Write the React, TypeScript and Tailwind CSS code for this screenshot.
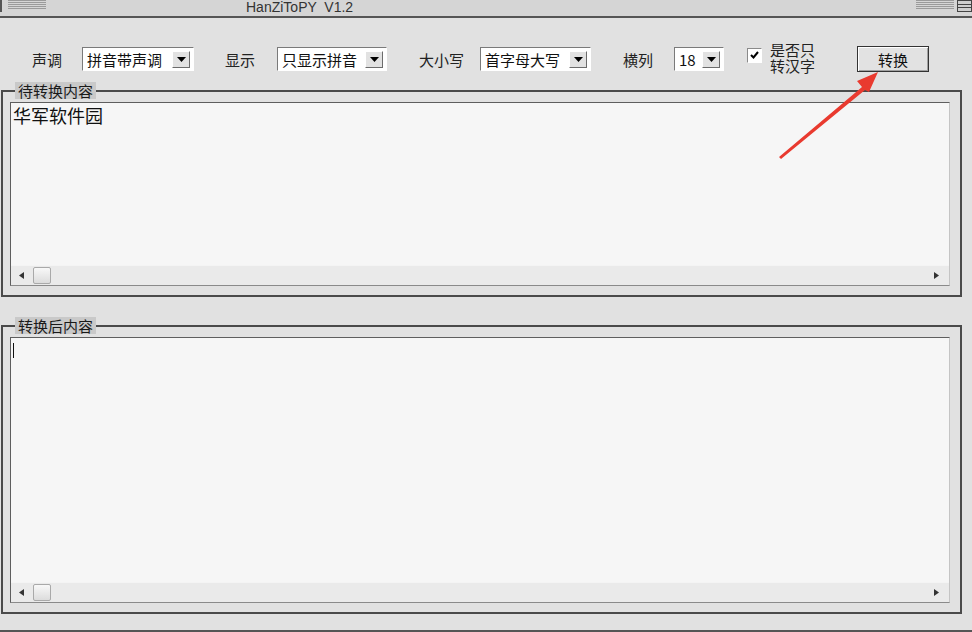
const font = { fontFamily: '"Noto Sans CJK SC", "Noto Sans", sans-serif' };

function Grip({ className = "" }: { className?: string }) {
  return (
    <div className={`flex flex-col gap-[1px] ${className}`}>
      {[0, 1, 2, 3, 4].map((i) => (
        <div key={i} className="h-[1px] border-b border-[#9a9a9a] bg-white" />
      ))}
    </div>
  );
}

function Combo({ text, width }: { text: string; width: string }) {
  return (
    <div className={`flex h-[24px] ${width} items-center border border-b-white border-l-[#7a7a7a] border-r-white border-t-[#7a7a7a] bg-white pl-[4px] pr-[3px]`}>
      <span className="flex-1 text-[15px] leading-none text-[#111]">{text}</span>
      <div className="flex h-[17px] w-[18px] items-center justify-center border border-b-[#6c6c6c] border-l-white border-r-[#6c6c6c] border-t-white bg-[#e2e2e2]">
        <svg width="9" height="5" viewBox="0 0 9 5"><path d="M0 0h9L4.5 5z" fill="#000" /></svg>
      </div>
    </div>
  );
}

function Label({ text, width, className = "" }: { text: string; width: string; className?: string }) {
  return <span className={`${width} ${className} text-[15px] leading-none text-[#222]`}>{text}</span>;
}

function ScrollBar() {
  return (
    <div className="flex h-[20px] items-center border-t border-[#f4f4f4] bg-[#eaeaea] pl-[8px] pr-[10px]">
      <svg width="5" height="7" viewBox="0 0 5 7"><path d="M5 0v7L0 3.5z" fill="#333" /></svg>
      <div className="ml-[9px] h-[17px] w-[18px] rounded-[2px] border border-[#a9a9a9] bg-gradient-to-b from-[#f8f8f8] to-[#dcdcdc]" />
      <div className="flex-1" />
      <svg width="5" height="7" viewBox="0 0 5 7"><path d="M0 0v7L5 3.5z" fill="#333" /></svg>
    </div>
  );
}

function Group({ title, children, height, mt }: { title: string; children: React.ReactNode; height: string; mt: string }) {
  return (
    <fieldset className={`${mt} ml-[1px] w-[961px] border-2 border-[#4a4a4a] px-[7px] pb-[9px] pt-[3px]`}>
      <legend className="ml-[5px] bg-[#c9c9c9] px-[3px] text-[15px] leading-[17px] text-[#1a1a1a]">{title}</legend>
      <div className={`flex ${height} w-[940px] flex-col border border-b-[#8a8a8a] border-l-[#5e5e5e] border-r-[#c4c4c4] border-t-[#5e5e5e] bg-[#f6f6f6]`}>
        <div className="flex-1 px-[1px]">{children}</div>
        <ScrollBar />
      </div>
    </fieldset>
  );
}

export default function App() {
  return (
    <div className="relative h-[632px] w-[972px] overflow-hidden bg-[#e1e1e1]" style={font}>
      {/* title bar */}
      <div className="relative flex h-[18px] items-start border-b-2 border-[#555] bg-[#d5d5d5]">
        <div className="h-[12px] w-[2px] bg-[#555]" />
        <Grip className="ml-[6px] w-[38px]" />
        <div className="flex-1 pl-[200px] text-[14px] leading-[14px] text-[#333]" style={{ fontFamily: '"Liberation Sans", Arial, sans-serif' }}>
          <span className="whitespace-pre">HanZiToPY  V1.2</span>
        </div>
        <Grip className="w-[38px]" />
        <div className="ml-[3px] h-[12px] w-[15px] border border-[#444] bg-[#cfcfcf]">
          <div className="mt-[3px] h-[1px] bg-[#444]" />
          <div className="mt-[2px] h-[1px] bg-[#444]" />
        </div>
      </div>

      {/* toolbar */}
      <div className="mt-[22px] flex h-[38px] items-center pl-[32px]">
        <Label text="声调" width="w-[32px]" />
        <div className="ml-[18px]"><Combo text="拼音带声调" width="w-[112px]" /></div>
        <Label text="显示" width="w-[32px]" className="ml-[31px]" />
        <div className="ml-[20px]"><Combo text="只显示拼音" width="w-[110px]" /></div>
        <Label text="大小写" width="w-[48px]" className="ml-[32px]" />
        <div className="ml-[13px]"><Combo text="首字母大写" width="w-[111px]" /></div>
        <Label text="横列" width="w-[32px]" className="ml-[32px]" />
        <div className="ml-[19px]"><Combo text="18" width="w-[50px]" /></div>
        <div className="mb-[8px] ml-[23px] flex h-[15px] w-[15px] items-center justify-center border border-b-white border-l-[#8a8a8a] border-r-white border-t-[#8a8a8a] bg-white">
          <svg width="9" height="8" viewBox="0 0 9 8"><path d="M1 4l2.5 2.5L8 1" stroke="#000" strokeWidth="2" fill="none" /></svg>
        </div>
        <div className="ml-[8px] mb-[2px] flex w-[48px] flex-col text-[15px] leading-[16px] text-[#222]">
          <span>是否只</span>
          <span>转汉字</span>
        </div>
        <button className="ml-[39px] h-[26px] w-[72px] border border-[#333] bg-[#e2e2e2] text-[15px] leading-none text-[#111] shadow-[inset_1px_1px_0_#fff,inset_-1px_-1px_0_#a0a0a0]">
          转换
        </button>
      </div>

      <Group title="待转换内容" height="h-[184px]" mt="mt-[4px]">
        <div className="pl-[1px] pt-[1px] text-[18px] leading-[22px] text-[#111]">华军软件园</div>
      </Group>

      <Group title="转换后内容" height="h-[266px]" mt="mt-[20px]">
        <div className="ml-[1px] mt-[5px] h-[15px] w-[1px] bg-[#111]" />
      </Group>

      <div className="mt-[16px] h-[2px] bg-[#555]" />

      {/* red annotation arrow */}
      <svg className="absolute left-0 top-0" width="972" height="632" viewBox="0 0 972 632">
        <path d="M779 157 L862 87 L857 81 L878 72 L869 92 L865 90 L781 159 Z" fill="#e93a2f" />
      </svg>
    </div>
  );
}
